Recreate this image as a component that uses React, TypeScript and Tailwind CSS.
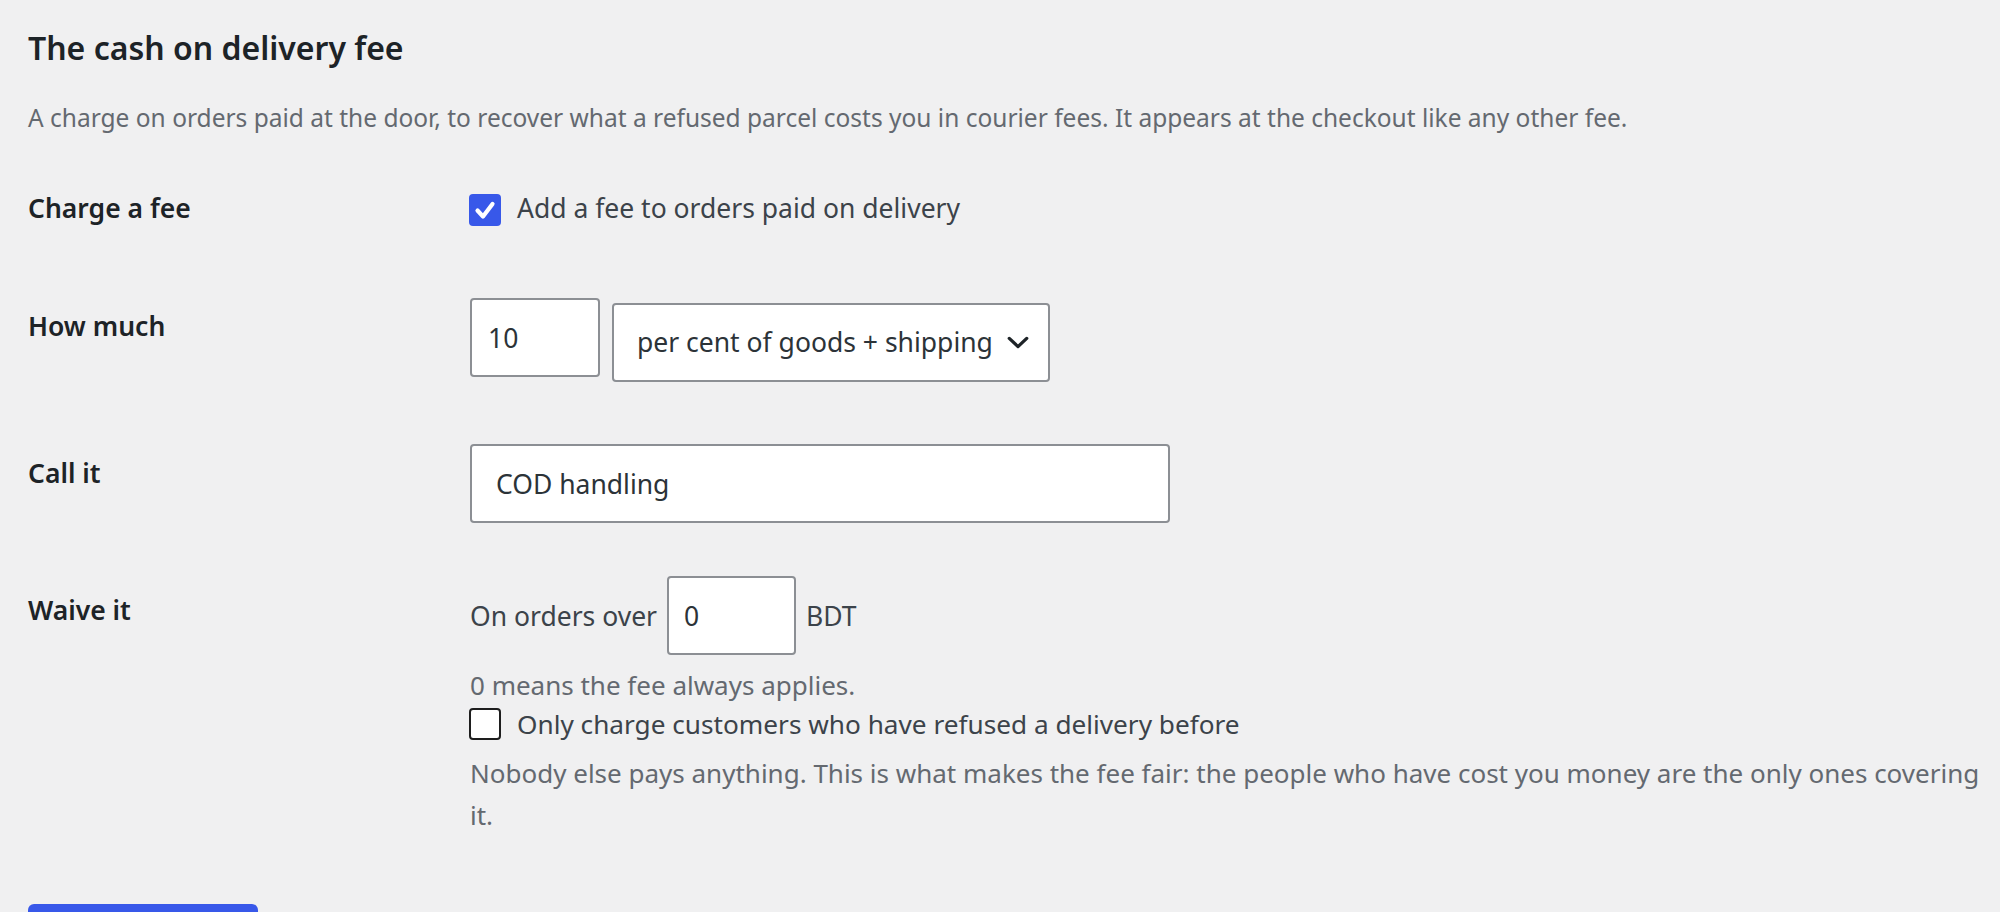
import React from "react";

const label = "w-[442px] shrink-0 text-[26.5px] leading-[36px] font-semibold text-[#1d2327]";
const field =
  "h-[79px] rounded-[4px] border-2 border-[#8c8f94] bg-white text-[26.5px] text-[#2c3338] outline-none";

function CheckMark() {
  return (
    <svg viewBox="0 0 32 32" className="h-[32px] w-[32px]">
      <path
        d="M8.5 16.5 L14 22.5 L23.5 10"
        fill="none"
        stroke="#ffffff"
        strokeWidth="4.2"
        strokeLinecap="round"
        strokeLinejoin="round"
      />
    </svg>
  );
}

function Checkbox({ checked }: { checked?: boolean }) {
  if (checked) {
    return (
      <span className="mt-[4px] flex h-[32px] w-[32px] shrink-0 items-center justify-center rounded-[4px] bg-[#3858e9]">
        <CheckMark />
      </span>
    );
  }
  return (
    <span className="mt-[2px] h-[32px] w-[32px] shrink-0 rounded-[4px] border-[2.5px] border-[#1e1e1e] bg-white" />
  );
}

export default function App() {
  return (
    <div className="h-[912px] overflow-hidden bg-[#f0f0f1] font-['Noto_Sans',sans-serif] text-[#3c434a]">
      <div className="pl-[28px] pt-[26px]">
        <h2 className="text-[32px] leading-[44px] font-semibold text-[#1d2327]">
          The cash on delivery fee
        </h2>
        <p className="mt-[28px] text-[24.5px] leading-[40px] text-[#646970]">
          A charge on orders paid at the door, to recover what a refused parcel costs you in courier
          fees. It appears at the checkout like any other fee.
        </p>

        {/* Charge a fee */}
        <div className="mt-[52px] flex items-start">
          <div className={label}>Charge a fee</div>
          <label className="-ml-[1px] flex items-start gap-[16px] text-[26.5px] leading-[36px]">
            <Checkbox checked />
            <span>Add a fee to orders paid on delivery</span>
          </label>
        </div>

        {/* How much */}
        <div className="mt-[72px] flex items-start">
          <div className={`${label} pt-[10px]`}>How much</div>
          <div className="flex items-start">
            <input type="text" defaultValue="10" className={`${field} w-[130px] pl-[16px]`} />
            <div className="relative ml-[12px] mt-[5px]">
              <select
                defaultValue="pct"
                className={`${field} h-[78px] w-[438px] appearance-none pl-[23px] pr-[50px]`}
              >
                <option value="pct">per cent of goods + shipping</option>
                <option value="flat">flat amount</option>
              </select>
              <svg
                viewBox="0 0 24 14"
                className="pointer-events-none absolute right-[21px] top-[33px] h-[13px] w-[22px]"
              >
                <path
                  d="M2.5 2.5 L12 11.5 L21.5 2.5"
                  fill="none"
                  stroke="#1d2327"
                  strokeWidth="3.6"
                  strokeLinecap="round"
                  strokeLinejoin="round"
                />
              </svg>
            </div>
          </div>
        </div>

        {/* Call it */}
        <div className="mt-[62px] flex items-start">
          <div className={`${label} pt-[11px]`}>Call it</div>
          <input
            type="text"
            defaultValue="COD handling"
            className={`${field} h-[78px] w-[700px] pl-[24px]`}
          />
        </div>

        {/* Waive it */}
        <div className="mt-[53px] flex items-start">
          <div className={`${label} pt-[16px]`}>Waive it</div>
          <div className="flex flex-col text-[26.5px]">
            <div className="flex items-center gap-[10px] leading-[36px]">
              <span>On orders over</span>
              <input type="text" defaultValue="0" className={`${field} w-[129px] pl-[15px]`} />
              <span>BDT</span>
            </div>
            <p className="mt-[9px] text-[26px] leading-[42px] text-[#646970]">
              0 means the fee always applies.
            </p>
            <label className="-ml-[1px] flex items-start gap-[16px] text-[26.2px] leading-[36px]">
              <Checkbox />
              <span>Only charge customers who have refused a delivery before</span>
            </label>
            <p className="mt-[10px] whitespace-nowrap text-[26px] leading-[42px] text-[#646970]">
              Nobody else pays anything. This is what makes the fee fair: the people who have cost you
              money are the only ones covering
              <br />
              it.
            </p>
          </div>
        </div>

        <button
          aria-label="Save changes"
          className="mt-[68px] h-[64px] w-[230px] rounded-[6px] bg-[#3858e9]"
        />
      </div>
    </div>
  );
}
